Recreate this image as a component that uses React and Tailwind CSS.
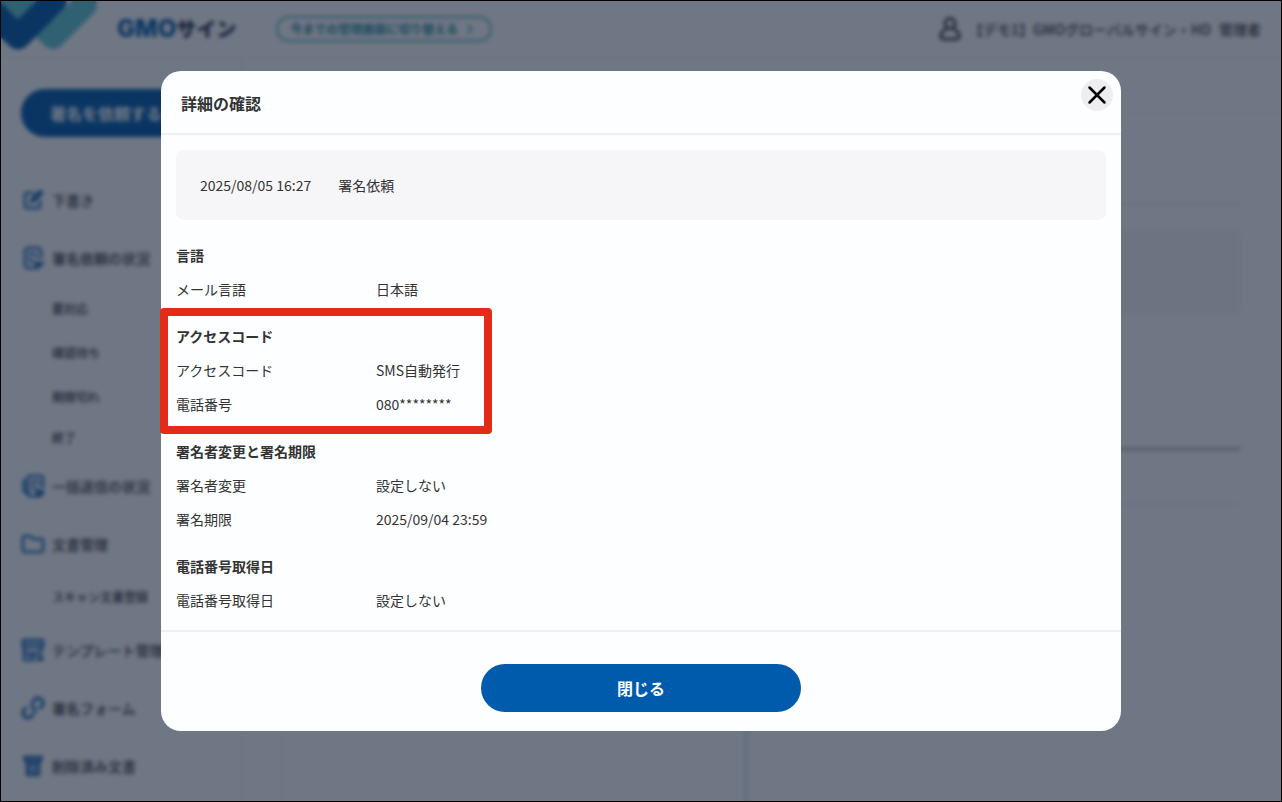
import React from 'react';
import { ChevronRight, X } from 'lucide-react';

const iconProps = {
  viewBox: '0 0 24 24',
  fill: 'none',
  stroke: 'currentColor',
  strokeWidth: 2.6,
  strokeLinecap: 'round',
  strokeLinejoin: 'round',
  className: 'w-6 h-6 shrink-0 text-[#1a68b8]',
  'aria-hidden': true,
};

const DraftIcon = () => (
  <svg {...iconProps}>
    <path d="M12 5H6a2 2 0 0 0-2 2v11a2 2 0 0 0 2 2h11a2 2 0 0 0 2-2v-5" />
    <path d="M10 14l1-3 8-8 2 2-8 8z" fill="currentColor" />
  </svg>
);

const RequestIcon = () => (
  <svg {...iconProps}>
    <path d="M20 12V5a3 3 0 0 0-3-3H7a3 3 0 0 0-3 3v14a3 3 0 0 0 3 3h8" />
    <path d="M9 7h3a3 3 0 0 1 3 3v2M9 7v9h5" strokeWidth="2" />
    <path d="M15 17h7l-6 5z" fill="currentColor" />
  </svg>
);

const BulkIcon = () => (
  <svg {...iconProps}>
    <path d="M22 13V4a2 2 0 0 0-2-2H9a2 2 0 0 0-2 2v15a3 3 0 0 0 3 3h7" />
    <path d="M3 6v11l5 4" strokeWidth="3" />
    <path d="M12 7h3a3 3 0 0 1 3 3v1M12 7v8h4" strokeWidth="2" />
    <path d="M16 17h6v2l-3 3h-3z" fill="currentColor" />
  </svg>
);

const FolderIcon = () => (
  <svg {...iconProps}>
    <path d="M2 6a2 2 0 0 1 2-2h5l3 3h8a2 2 0 0 1 2 2v9a2 2 0 0 1-2 2H4a2 2 0 0 1-2-2z" />
  </svg>
);

const TemplateIcon = () => (
  <svg {...iconProps}>
    <path d="M2 2h20v7H2z" fill="currentColor" fillOpacity="0.4" />
    <path d="M3 9v13h11M4 15h14M20 9v6" />
    <path d="M8 18h6" />
    <path d="M18 19h3v3h-3z" fill="currentColor" />
  </svg>
);

const FormIcon = () => (
  <svg {...iconProps} strokeWidth="3.4" strokeLinecap="butt">
    <path d="M12 7a5 5 0 1 1 6 5" />
    <path d="M12 17a5 5 0 1 1-6-5" />
    <path d="M11 7v5h3v5" strokeWidth="2.6" />
  </svg>
);

const TrashIcon = () => (
  <svg {...iconProps}>
    <path d="M3 3h18l-2 5H5z" fill="currentColor" fillOpacity="0.6" />
    <path d="M6 8h12v13H6z" fill="currentColor" fillOpacity="0.6" />
  </svg>
);

const menu = [
  { label: '下書き', icon: DraftIcon },
  {
    label: '署名依頼の状況',
    icon: RequestIcon,
    childClass: 'h-11 last:h-[38px]',
    children: ['要対応', '確認待ち', '期限切れ', '終了'],
  },
  { label: '一括送信の状況', icon: BulkIcon },
  { label: '文書管理', icon: FolderIcon, childClass: 'h-12', children: ['スキャン文書登録'] },
  { label: 'テンプレート管理', icon: TemplateIcon },
  { label: '署名フォーム', icon: FormIcon },
  { label: '削除済み文書', icon: TrashIcon },
];

const sections = [
  { title: '言語', rows: [['メール言語', '日本語']] },
  {
    title: 'アクセスコード',
    rows: [['アクセスコード', 'SMS自動発行'], ['電話番号', '080********']],
    highlight: true,
  },
  {
    title: '署名者変更と署名期限',
    rows: [['署名者変更', '設定しない'], ['署名期限', '2025/09/04 23:59']],
  },
  { title: '電話番号取得日', rows: [['電話番号取得日', '設定しない']] },
];

function Logo() {
  return (
    <svg
      viewBox="1 1 100 56"
      className="w-[100px] h-14 shrink-0"
      fill="none"
      strokeWidth="24"
      strokeLinecap="round"
      strokeLinejoin="round"
      aria-hidden="true"
    >
      <path d="M1 -15L53 37L85 5" stroke="#5fc8d2" />
      <path d="M-30 -11L18 37L54 1" stroke="#005bac" strokeWidth="25" />
    </svg>
  );
}

function Header() {
  return (
    <header className="flex items-center h-[58px] border-b border-[#e3e5ec] pr-5 pb-0.5">
      <Logo />
      <div className="flex items-center ml-4 font-extrabold leading-none">
        <span className="font-[Inter] text-[24px] text-[#005bac]">GMO</span>
        <span className="text-[20px] font-black text-[#1b2a4a]">サイン</span>
      </div>
      <button className="flex items-center gap-1 h-[26px] ml-10 px-3 rounded-full border-2 border-[#5fb4c4] text-xs font-bold text-[#1f889c]">
        今までの管理画面に切り替える
        <ChevronRight size={16} />
      </button>
      <div className="flex items-center gap-2 ml-auto text-sm font-medium text-[#333]">
        <svg viewBox="0 0 24 28" className="w-[22px] h-[26px]" fill="none" stroke="currentColor" strokeWidth="3" aria-hidden="true">
          <circle cx="12" cy="8" r="5.5" />
          <path d="M8 14C4 16 2 19 2 22q0 3 3 3h14q3 0 3-3c0-3-2-6-6-8" />
        </svg>
        <span>【デモ1】GMOグローバルサイン・HD</span>
        <span>管理者</span>
      </div>
    </header>
  );
}

function Sidebar() {
  return (
    <aside className="w-[242px] shrink-0 border-r border-[#e3e5ec] pt-[30px]">
      <button className="block w-[200px] h-12 ml-5 pl-[29px] rounded-full bg-[#005bac] text-left text-base font-bold text-white">
        署名を依頼する
      </button>
      <nav className="mt-[34px]">
        <ul>
          {menu.map(({ label, icon: Icon, children, childClass }) => (
            <li key={label}>
              <a href="#" className="flex items-center gap-[7px] h-[58px] pl-5 text-sm font-medium text-[#333]">
                <Icon />
                {label}
              </a>
              {children && (
                <ul>
                  {children.map((child) => (
                    <li key={child} className={childClass}>
                      <a href="#" className="flex items-center h-full pl-[51px] text-xs font-medium text-[#333]">
                        {child}
                      </a>
                    </li>
                  ))}
                </ul>
              )}
            </li>
          ))}
        </ul>
      </nav>
    </aside>
  );
}

function Workspace() {
  return (
    <main className="flex flex-col flex-1">
      <div className="h-[54px] border-b border-[#e3e5ec]" />
      <div className="flex flex-col flex-1 pl-[38px] pr-10">
        <div className="h-[92px] border-b-2 border-[#eceef3]" />
        <div className="h-[86px] mt-6 rounded-lg bg-[#f6f6f8]" />
        <div className="h-[136px] border-b-4 border-[#c8cad2]" />
        <div className="h-[54px] border-b-2 border-[#eceef3]" />
        <div className="flex flex-1 border-l border-[#e3e5ec]">
          <div className="w-[462px]" />
          <div className="flex-1 border-l-4 border-[#dcecf2]" />
        </div>
      </div>
    </main>
  );
}

function DetailSection({ title, rows, highlight }) {
  return (
    <section className="relative leading-[34px]">
      <h3 className="font-bold">{title}</h3>
      <dl>
        {rows.map(([term, value]) => (
          <div key={term} className="flex">
            <dt className="w-[200px] shrink-0">{term}</dt>
            <dd>{value}</dd>
          </div>
        ))}
      </dl>
      {highlight && (
        <div className="absolute -top-[11px] -bottom-[13px] -left-4 w-[332px] border-8 border-[#e42a19] rounded-sm pointer-events-none" />
      )}
    </section>
  );
}

function DetailDialog() {
  return (
    <div
      role="dialog"
      aria-modal="true"
      aria-labelledby="dialog-title"
      className="w-full max-w-[960px] rounded-[20px] bg-[#fdfeff] text-sm text-[#333]"
    >
      <div className="flex items-start justify-between h-16 pt-2 pl-5 pr-2 border-b-2 border-[#eff0f4]">
        <h2 id="dialog-title" className="pt-1 text-base leading-10 font-bold">詳細の確認</h2>
        <button aria-label="閉じる" className="flex items-center justify-center w-8 h-8 rounded-full bg-[#eeedf2] text-black">
          <X size={30} strokeWidth={2} />
        </button>
      </div>

      <div className="px-[15px] pt-[15px] pb-[13px]">
        <div className="flex items-center gap-[27px] h-[70px] px-6 mb-[18px] rounded-lg bg-[#f6f6f8]">
          <time>2025/08/05 16:27</time>
          <span>署名依頼</span>
        </div>
        <div className="flex flex-col gap-[13px]">
          {sections.map((section) => (
            <DetailSection key={section.title} {...section} />
          ))}
        </div>
      </div>

      <div className="flex justify-center pt-8 pb-[19px] border-t-2 border-[#eff0f4]">
        <button className="w-80 h-12 rounded-full bg-[#005bac] text-base font-bold text-white">閉じる</button>
      </div>
    </div>
  );
}

function App() {
  return (
    <div className="relative flex flex-col min-h-screen border border-black bg-white overflow-hidden font-['Noto_Sans_CJK_JP','Noto_Sans',sans-serif]">
      <Header />
      <div className="flex flex-1">
        <Sidebar />
        <Workspace />
      </div>
      <div className="absolute inset-0 flex items-center justify-center bg-[#111c32]/60 backdrop-blur-[2px]">
        <DetailDialog />
      </div>
    </div>
  );
}

export default App;
